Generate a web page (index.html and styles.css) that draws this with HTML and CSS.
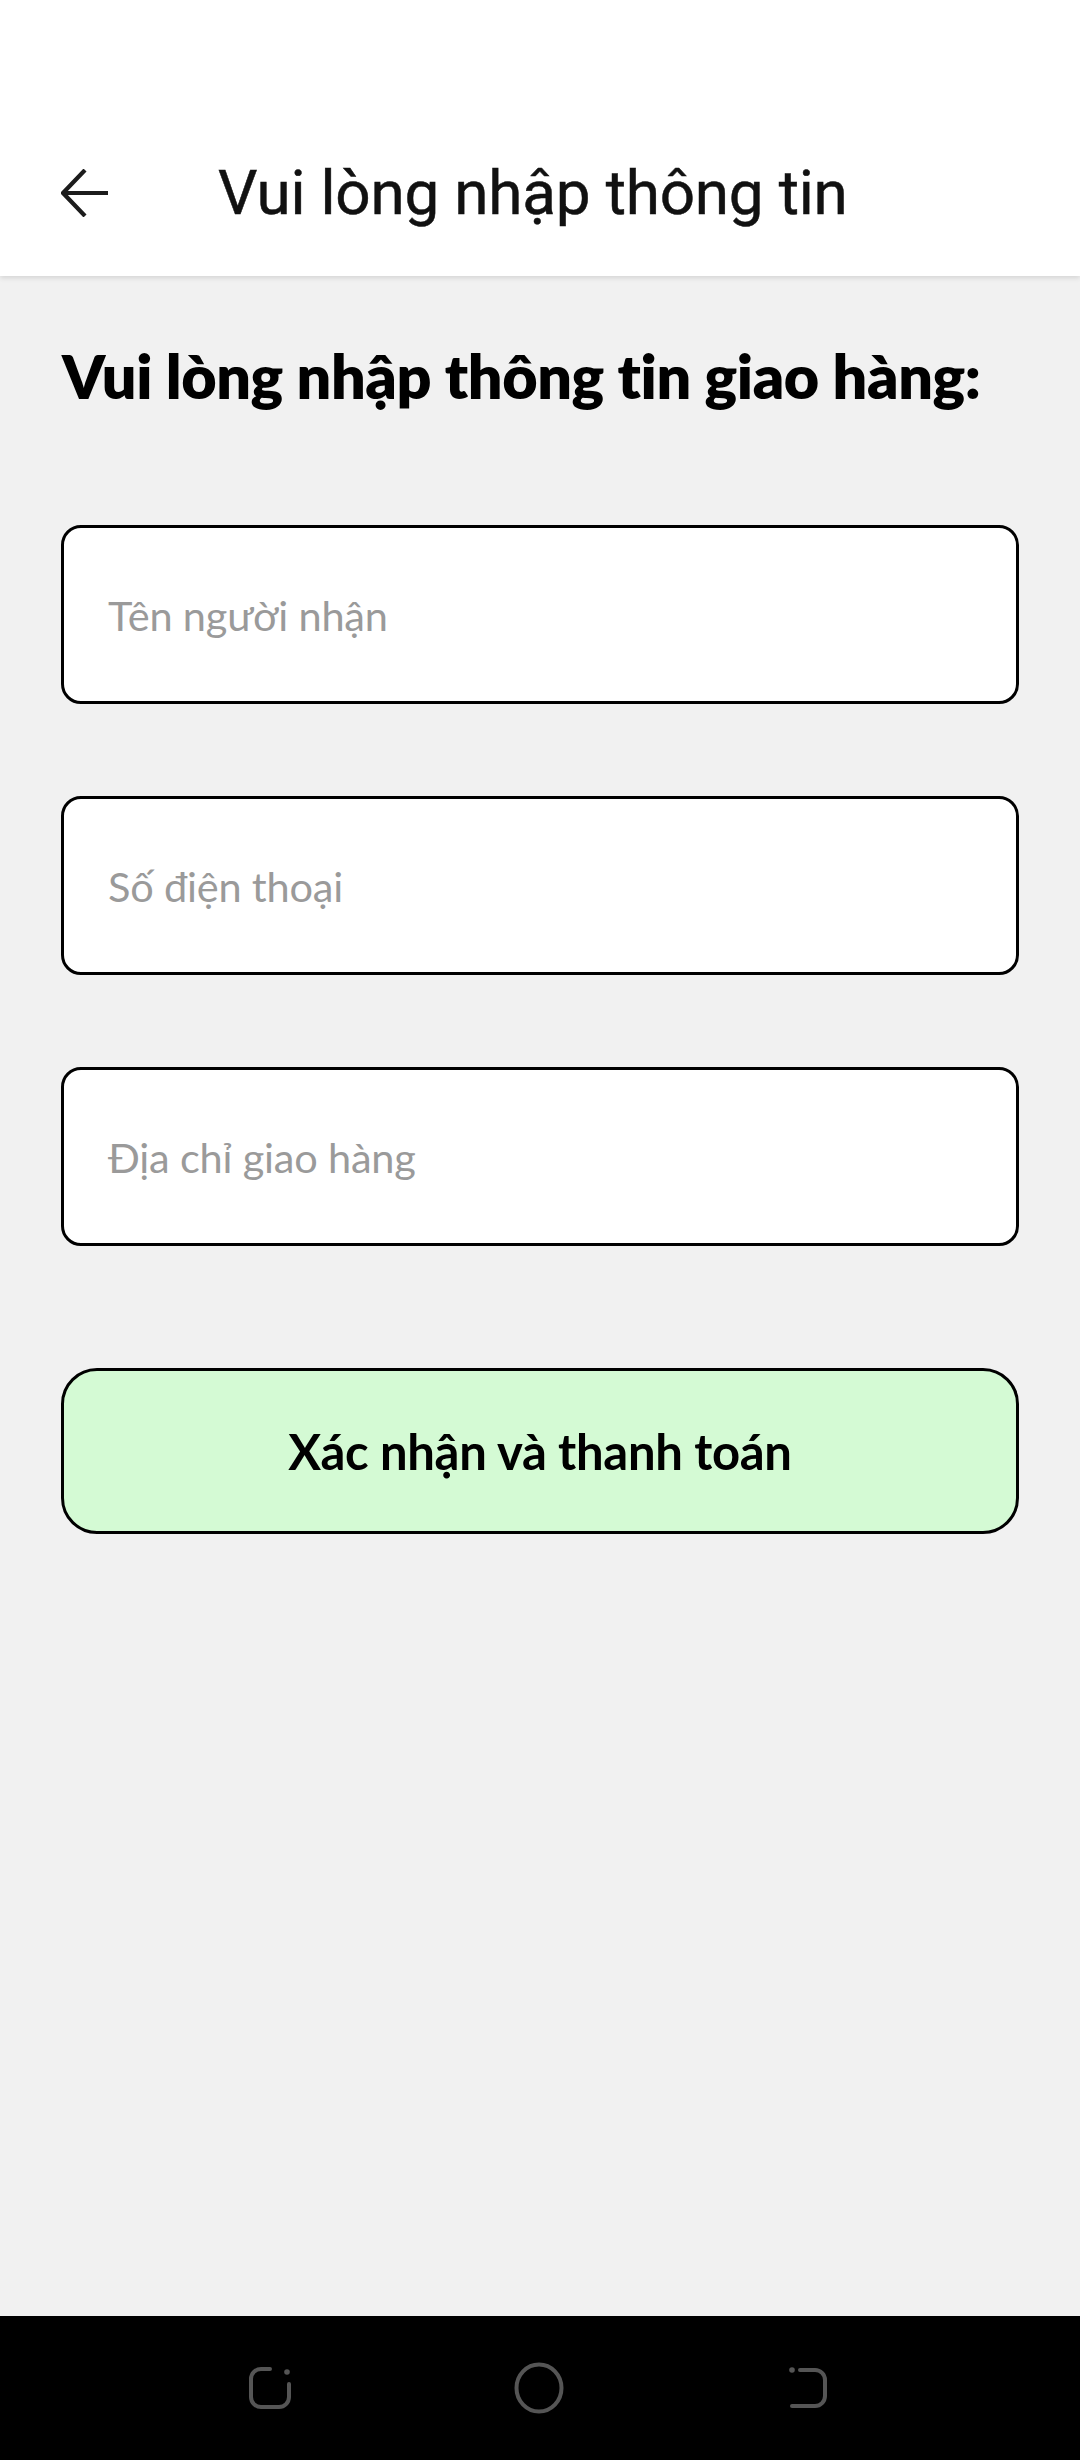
FILE: index.html
```html
<!DOCTYPE html>
<html lang="vi">
<head>
<meta charset="utf-8">
<title>Vui lòng nhập thông tin</title>
<link rel="stylesheet" href="styles.css">
</head>
<body>
<div class="screen">
  <header class="appbar">
    <svg class="back" width="48" height="48" viewBox="0 0 48 48" aria-hidden="true">
      <path d="M47 24H3M24 1L2 24L24 47" fill="none" stroke="#1c1c1c" stroke-width="4.2" stroke-linejoin="miter"/>
    </svg>
    <h1 class="appbar-title">Vui lòng nhập thông tin</h1>
  </header>
  <main class="content">
    <h2 class="heading">Vui lòng nhập thông tin giao hàng:</h2>
    <div class="form">
      <div class="field"><span class="placeholder">Tên người nhận</span></div>
      <div class="field"><span class="placeholder">Số điện thoại</span></div>
      <div class="field"><span class="placeholder">Địa chỉ giao hàng</span></div>
      <div class="submit">Xác nhận và thanh toán</div>
    </div>
  </main>
  <nav class="navbar">
    <svg width="48" height="48" viewBox="0 0 48 48" aria-hidden="true">
      <path d="M24 5H15A10 10 0 0 0 5 15V33A10 10 0 0 0 15 43H33A10 10 0 0 0 43 33V20" fill="none" stroke="#555" stroke-width="4" stroke-linecap="round"/>
      <circle cx="41" cy="8" r="2.8" fill="#555"/>
    </svg>
    <svg width="52" height="52" viewBox="0 0 52 52" aria-hidden="true">
      <ellipse cx="26" cy="26" rx="22.5" ry="23.5" fill="none" stroke="#555" stroke-width="4"/>
    </svg>
    <svg width="48" height="48" viewBox="0 0 48 48" aria-hidden="true">
      <path d="M16 6H31A10 10 0 0 1 41 16V32A10 10 0 0 1 31 42H8" fill="none" stroke="#555" stroke-width="4" stroke-linecap="round"/>
      <circle cx="8" cy="6" r="2.8" fill="#555"/>
    </svg>
  </nav>
</div>
</body>
</html>
```

FILE: styles.css
```css
* { box-sizing: border-box; }
html, body { margin: 0; padding: 0; }
body { background: #f1f1f1; }
.screen {
  width: 1080px;
  height: 2460px;
  display: flex;
  flex-direction: column;
  background: #f1f1f1;
  overflow: hidden;
}
.appbar {
  height: 276px;
  flex: none;
  background: #fff;
  display: flex;
  align-items: center;
  padding: 110px 0 0 61px;
  box-shadow: 0 2px 5px rgba(0,0,0,0.12);
  position: relative;
  z-index: 1;
}
.back { flex: none; }
.appbar-title {
  margin: 0 0 0 109px;
  font-family: Roboto, "Noto Sans", sans-serif;
  font-weight: 400;
  font-size: 62px;
  line-height: 1;
  color: #111;
  letter-spacing: -0.2px;
  -webkit-text-stroke: 0.5px #111;
}
.content {
  flex: 1;
  padding: 0 61px;
}
.heading {
  margin: 64px 0 0 1px;
  font-family: Lato, "Noto Sans", sans-serif;
  font-weight: 800;
  font-size: 61px;
  line-height: 72px;
  color: #000;
  letter-spacing: -0.4px;
}
.form {
  margin-top: 113px;
  display: flex;
  flex-direction: column;
  gap: 92px;
}
.field {
  height: 179px;
  background: #fff;
  border: 3px solid #000;
  border-radius: 20px;
  display: flex;
  align-items: center;
  padding: 0 44px;
}
.placeholder {
  font-family: Lato, "Noto Sans", sans-serif;
  font-size: 41.5px;
  color: #9a9a9a;
  letter-spacing: -0.2px;
}
.submit {
  margin-top: 30px;
  height: 166px;
  background: #d4fad4;
  border: 3px solid #000;
  border-radius: 36px;
  display: flex;
  align-items: center;
  justify-content: center;
  font-family: Lato, "Noto Sans", sans-serif;
  font-weight: 700;
  font-size: 49px;
  color: #000;
  letter-spacing: -0.3px;
}
.navbar {
  height: 144px;
  flex: none;
  background: #000;
  display: flex;
  align-items: center;
  justify-content: space-between;
  padding: 0 248px 0 246px;
}
```
